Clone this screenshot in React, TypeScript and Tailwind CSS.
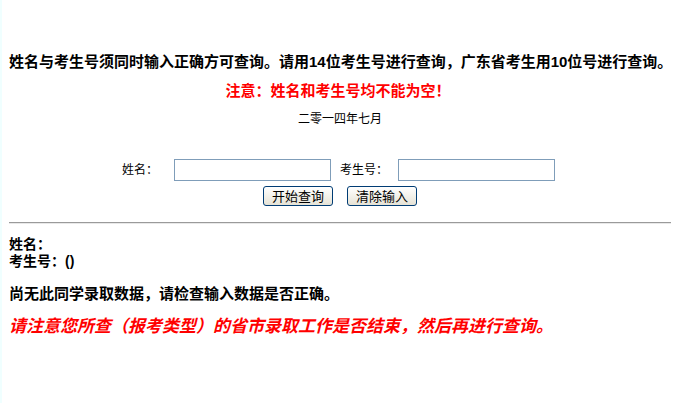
const cjk = "font-['Liberation_Sans','Noto_Sans_CJK_SC',sans-serif]";

function XpButton({ label }: { label: string }) {
  return (
    <button
      type="button"
      className="flex h-[20px] w-[70px] items-center justify-center rounded-[3px] border border-[#003c74] bg-gradient-to-b from-white to-[#e6e3d6] text-[13px] leading-none text-black"
    >
      {label}
    </button>
  );
}

export default function App() {
  return (
    <div className={`${cjk} flex h-[403px] w-[681px] flex-col overflow-hidden border-l-2 border-[#f0ffff] bg-white pt-[53px] pl-[7px] pr-[10px] text-black`}>
      <p className="text-[15px] font-bold leading-[18px] whitespace-nowrap">
        姓名与考生号须同时输入正确方可查询。请用14位考生号进行查询，广东省考生用10位号进行查询。
      </p>
      <p className="mt-[11px] pr-[4px] text-center text-[15px] font-bold leading-[18px] text-[#ff0000]">
        注意：姓名和考生号均不能为空！
      </p>
      <p className="mt-[11px] text-center text-[12px] leading-[16px]">二零一四年七月</p>

      <div className="mt-[32px] flex h-[22px] items-center justify-center pr-[3px] text-[12px]">
        <span className="w-[36px]">姓名：</span>
        <input className="ml-[16px] h-[22px] w-[157px] border border-[#7f9db9] bg-white" />
        <span className="ml-[9px] w-[48px]">考生号：</span>
        <input className="ml-[10px] h-[22px] w-[157px] border border-[#7f9db9] bg-white" />
      </div>

      <div className="mt-[5px] flex justify-center gap-[14px]">
        <XpButton label="开始查询" />
        <XpButton label="清除输入" />
      </div>

      <hr className="mt-[16px] border-t border-b border-t-[#9a9a9a] border-b-[#e8e8e8]" />

      <div className="mt-[12px] text-[14px] font-bold leading-[17px]">
        <p>姓名：</p>
        <p>考生号：()</p>
      </div>

      <p className="mt-[15px] text-[15px] font-bold leading-[18px]">
        尚无此同学录取数据，请检查输入数据是否正确。
      </p>

      <p className="mt-[14px] text-[17px] font-bold italic leading-[20px] text-[#ff0000]">
        请注意您所查（报考类型）的省市录取工作是否结束，然后再进行查询。
      </p>
    </div>
  );
}
